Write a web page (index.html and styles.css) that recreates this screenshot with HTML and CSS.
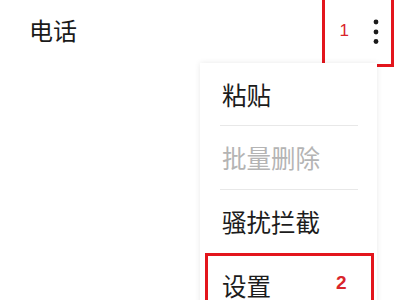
FILE: index.html
```html
<!DOCTYPE html>
<html lang="zh">
<head>
<meta charset="utf-8">
<link rel="stylesheet" href="styles.css">
</head>
<body>
<div class="screen">
  <header class="topbar">
    <h1 class="title">电话</h1>
    <div class="actions">
      <span class="mark mark-1">1</span>
      <svg class="more" width="8" height="26" viewBox="0 0 8 26">
        <circle cx="4" cy="3" r="2.4" fill="#1a1a1a"/>
        <circle cx="4" cy="13" r="2.4" fill="#1a1a1a"/>
        <circle cx="4" cy="22.5" r="2.4" fill="#1a1a1a"/>
      </svg>
    </div>
    <div class="annot annot-1"></div>
  </header>
  <ul class="menu">
    <li class="item">粘贴</li>
    <li class="sep"></li>
    <li class="item disabled">批量删除</li>
    <li class="sep"></li>
    <li class="item">骚扰拦截</li>
    <li class="item last">设置<span class="mark mark-2">2</span></li>
  </ul>
  <div class="annot annot-2"></div>
</div>
</body>
</html>
```

FILE: styles.css
```css
html, body {
  margin: 0;
  padding: 0;
  background: #ffffff;
}
body {
  font-family: "Noto Sans CJK SC", "Noto Sans", sans-serif;
  color: #1c1c1c;
}
.screen {
  position: relative;
  width: 400px;
  height: 300px;
  overflow: hidden;
  background: #fff;
}
.topbar {
  display: flex;
  align-items: center;
  justify-content: space-between;
  height: 60px;
  padding: 0 20px 0 29px;
}
.title {
  margin: 0;
  font-size: 24px;
  font-weight: 400;
  line-height: 24px;
  color: #1a1a1a;
}
.actions {
  display: flex;
  align-items: center;
  gap: 23px;
}
.more {
  display: block;
  margin-top: 3px;
}
.mark {
  font-family: "Liberation Sans", Arial, sans-serif;
  color: #d9252b;
}
.mark-1 {
  font-size: 17px;
  line-height: 17px;
}
.mark-2 {
  font-size: 19px;
  font-weight: 700;
  margin-left: 65px;
  position: relative;
  top: -2px;
}
.annot {
  position: absolute;
  border: 3px solid #e3151c;
  box-sizing: border-box;
}
.annot-1 {
  left: 322px;
  top: -3px;
  width: 72px;
  height: 70px;
}
.annot-2 {
  left: 205px;
  top: 253px;
  width: 169px;
  height: 60px;
}
.menu {
  position: absolute;
  left: 200px;
  top: 63px;
  width: 177px;
  margin: 0;
  padding: 0;
  list-style: none;
  background: #fff;
  box-shadow: 0 0 6px rgba(0, 0, 0, 0.09);
}
.item {
  display: flex;
  align-items: center;
  height: 62px;
  padding-left: 22px;
  font-size: 24.5px;
  color: #1c1c1c;
}
.item.disabled {
  color: #b4b4b4;
  height: 63px;
}
.item.last {
  height: 66px;
}
.sep {
  height: 1px;
  margin: 0 19px 0 20px;
  background: #e8e8e8;
}
```
